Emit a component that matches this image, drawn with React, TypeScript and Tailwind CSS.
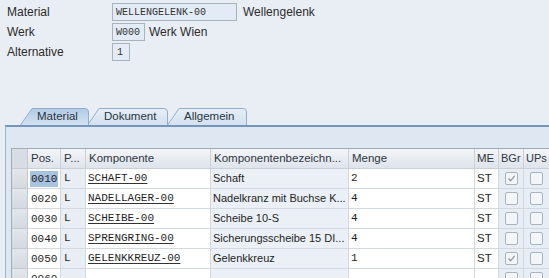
import React from "react";

type Row = {
  pos: string;
  p: string;
  komp: string;
  bez: string;
  menge: string;
  me: string;
  bgr: boolean;
  ups: boolean;
};

const rows: Row[] = [
  { pos: "0010", p: "L", komp: "SCHAFT-00", bez: "Schaft", menge: "2", me: "ST", bgr: true, ups: false },
  { pos: "0020", p: "L", komp: "NADELLAGER-00", bez: "Nadelkranz mit Buchse K...", menge: "4", me: "ST", bgr: false, ups: false },
  { pos: "0030", p: "L", komp: "SCHEIBE-00", bez: "Scheibe 10-S", menge: "4", me: "ST", bgr: false, ups: false },
  { pos: "0040", p: "L", komp: "SPRENGRING-00", bez: "Sicherungsscheibe 15 DI...", menge: "4", me: "ST", bgr: false, ups: false },
  { pos: "0050", p: "L", komp: "GELENKKREUZ-00", bez: "Gelenkkreuz", menge: "1", me: "ST", bgr: true, ups: false },
  { pos: "0060", p: "", komp: "", bez: "", menge: "", me: "", bgr: false, ups: false },
];

const cols = "grid-cols-[16px_33px_25px_125px_138px_126px_24px_25px_26px]";

function Check({ on }: { on: boolean }) {
  return (
    <span className="flex h-[13px] w-[13px] items-center justify-center rounded-[2px] border border-[#a9b3bd] bg-[#f3f6f9]">
      {on && (
        <svg width="9" height="9" viewBox="0 0 9 9">
          <path d="M1.5 4.5 L3.6 6.8 L7.6 1.8" fill="none" stroke="#8d969f" strokeWidth="1.3" />
        </svg>
      )}
    </span>
  );
}

function Tab({ label, w, active }: { label: string; w: number; active?: boolean }) {
  const s = 12;
  const h = 17;
  const id = active ? "tabA" : "tabI" + label;
  return (
    <div className={`relative h-[17px] shrink-0 ${active ? "z-10" : ""}`} style={{ width: w }}>
      <svg className="absolute inset-0" width={w} height={h} viewBox={`0 0 ${w} ${h}`}>
        <defs>
          <linearGradient id={id} x1="0" y1="0" x2="0" y2="1">
            <stop offset="0" stopColor={active ? "#b3cbe6" : "#e6eef7"} />
            <stop offset="1" stopColor={active ? "#d3e2f2" : "#d4e1ef"} />
          </linearGradient>
        </defs>
        <path
          d={`M0.5 ${h} L${s} 0.5 L${w - 4} 0.5 Q${w - 0.5} 0.5 ${w - 0.5} 4 L${w - 0.5} ${h}`}
          fill={`url(#${id})`}
          stroke="#93aecb"
        />
      </svg>
      <span className="relative flex h-full items-center pl-[17px] text-[11.5px] text-[#2a3440]">{label}</span>
    </div>
  );
}

const headers = [
  { t: "Pos.", c: "pl-[3px]" },
  { t: "P...", c: "pl-[3px]" },
  { t: "Komponente", c: "pl-[3px]" },
  { t: "Komponentenbezeichn...", c: "pl-[3px]" },
  { t: "Menge", c: "pl-[3px]" },
  { t: "ME", c: "pl-[2px]" },
  { t: "BGr", c: "pl-[2px] text-[11px]" },
  { t: "UPs", c: "pl-[2px] text-[11px]" },
];

export default function App() {
  return (
    <div className="h-[278px] w-[549px] overflow-hidden bg-[#e9eef4] font-['Liberation_Sans',Arial,sans-serif] text-[12px] text-[#2b2b2b]">
      {/* header fields */}
      <div className="flex flex-col gap-[2px] pl-[7px] pt-[3px]">
        <div className="flex h-[18px] items-center">
          <span className="w-[105px]">Material</span>
          <span className="flex h-[18px] w-[125px] items-center border border-[#a9b3bd] bg-[#e3ecf6] pl-[3px] font-['Liberation_Mono',monospace] text-[10px] text-[#333]">
            WELLENGELENK-00
          </span>
          <span className="ml-[6px]">Wellengelenk</span>
        </div>
        <div className="flex h-[18px] items-center">
          <span className="w-[105px]">Werk</span>
          <span className="flex h-[18px] w-[33px] items-center border border-[#a9b3bd] bg-[#e3ecf6] pl-[3px] font-['Liberation_Mono',monospace] text-[10px] text-[#333]">
            W000
          </span>
          <span className="ml-[4px]">Werk Wien</span>
        </div>
        <div className="flex h-[18px] items-center">
          <span className="w-[105px]">Alternative</span>
          <span className="flex h-[18px] w-[18px] items-center border border-[#a9b3bd] bg-[#e3ecf6] pl-[4px] font-['Liberation_Mono',monospace] text-[10px] text-[#333]">
            1
          </span>
        </div>
      </div>

      {/* tabs */}
      <div className="mt-[47px] flex pl-[20px]">
        <Tab label="Material" w={69} active />
        <div className="-ml-[2px]">
          <Tab label="Dokument" w={81} />
        </div>
        <div className="-ml-[1px]">
          <Tab label="Allgemein" w={80} />
        </div>
      </div>

      {/* panel */}
      <div className="ml-[5px] border-l border-t-2 border-l-[#9fb4cb] border-t-[#7595bb] bg-[#dfe8f2] pl-[5px] pt-[21px]">
        <div className="border-l border-t border-[#a3acb6] bg-white text-[11px]">
          <div className={`grid ${cols} h-[20px] bg-gradient-to-b from-[#f3f5f8] to-[#dde3ea] text-[11.5px] text-[#2e3640]`}>
            <div className="border-b border-r border-[#c4cbd3] bg-[#d8dde3]" />
            {headers.map((h) => (
              <div key={h.t} className={`flex items-center overflow-hidden whitespace-nowrap border-b border-r border-[#c9d0d8] ${h.c}`}>
                {h.t}
              </div>
            ))}
          </div>
          {rows.map((r, i) => (
            <div key={r.pos} className={`grid ${cols} h-[20px] text-[#1e1e1e]`}>
              <div className="border-b border-r border-[#c2c9d1] bg-gradient-to-b from-[#e3e7ec] to-[#d3d9df]" />
              <div className="flex items-center border-b border-r border-[#d3d9e0] bg-white pl-[2px]">
                <span
                  className={`px-[1px] font-['Liberation_Mono',monospace] text-[11px] leading-[16px] ${i === 0 ? "bg-[#a8c3e2]" : ""}`}
                >
                  {r.pos}
                </span>
              </div>
              <div className="flex items-center border-b border-r border-[#d3d9e0] bg-[#e9eef4] pl-[3px] font-['Liberation_Mono',monospace] text-[11px]">
                {r.p}
              </div>
              <div className="flex items-center border-b border-r border-[#d3d9e0] bg-white pl-[2px] font-['Liberation_Mono',monospace] text-[11px]">
                <span className="underline decoration-[#333] underline-offset-[2px]">{r.komp}</span>
              </div>
              <div className="flex items-center overflow-hidden whitespace-nowrap border-b border-r border-[#d3d9e0] bg-[#eaf0f6] pl-[2px]">
                {r.bez}
              </div>
              <div className="flex items-center border-b border-r border-[#d3d9e0] bg-white pl-[2px] font-['Liberation_Mono',monospace] text-[11px]">
                {r.menge}
              </div>
              <div className="flex items-center border-b border-r border-[#d3d9e0] bg-white pl-[2px] text-[11.5px]">{r.me}</div>
              <div className="flex items-center justify-center border-b border-r border-[#d3d9e0] bg-[#e6edf4]">
                <Check on={r.bgr} />
              </div>
              <div className="flex items-center justify-center border-b border-r border-[#d3d9e0] bg-[#e6edf4]">
                <Check on={r.ups} />
              </div>
            </div>
          ))}
        </div>
      </div>
    </div>
  );
}
